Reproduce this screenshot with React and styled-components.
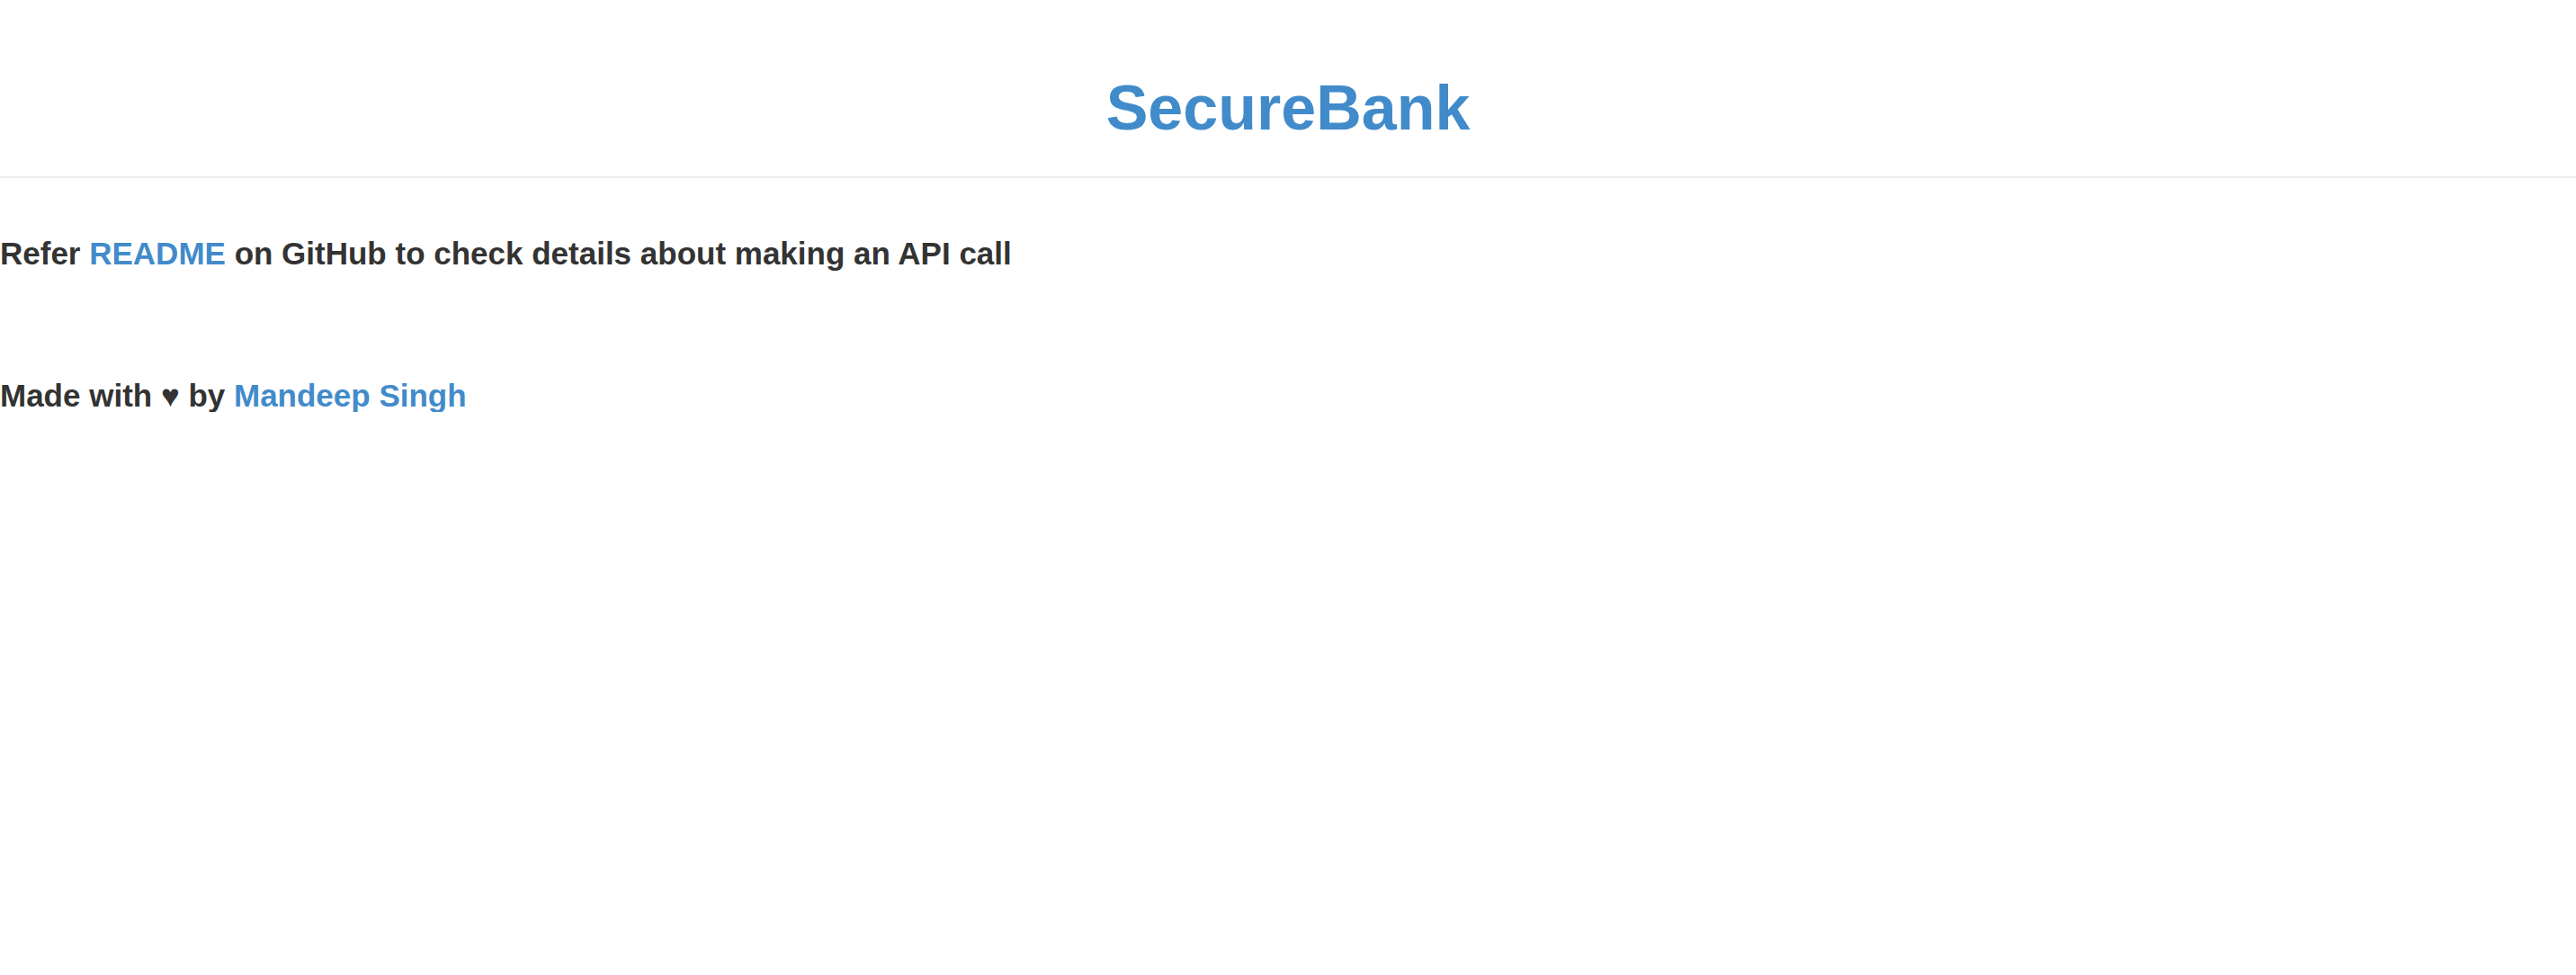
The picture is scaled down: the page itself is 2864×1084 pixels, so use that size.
import React from 'react'
import styled, { createGlobalStyle } from 'styled-components'

const GlobalStyle = createGlobalStyle`
  html, body {
    margin: 0;
    padding: 0;
    background: #fff;
  }
  body {
    font-family: "Liberation Sans", Arial, sans-serif;
    color: #333;
  }
`

const Header = styled.header`
  display: flex;
  justify-content: center;
  padding-top: 78px;
  padding-bottom: 34px;
  border-bottom: 2px solid #eee;
`

const Title = styled.h1`
  margin: 0;
  font-size: 70px;
  line-height: 84px;
  font-weight: 700;
  color: #428bca;
`

const Content = styled.main`
  display: flex;
  flex-direction: column;
  gap: 122px;
  padding-top: 66px;
`

const Line = styled.p`
  margin: 0;
  font-size: 35px;
  line-height: 36px;
  font-weight: 700;
  color: #333;
`

const Link = styled.a`
  color: #428bca;
  text-decoration: none;
`

export default function App() {
  return (
    <>
      <GlobalStyle />
      <Header>
        <Title>SecureBank</Title>
      </Header>
      <Content>
        <Line>
          Refer <Link href="#">README</Link> on GitHub to check details about making an API call
        </Line>
        <Line>
          Made with ♥ by <Link href="#">Mandeep Singh</Link>
        </Line>
      </Content>
    </>
  )
}
